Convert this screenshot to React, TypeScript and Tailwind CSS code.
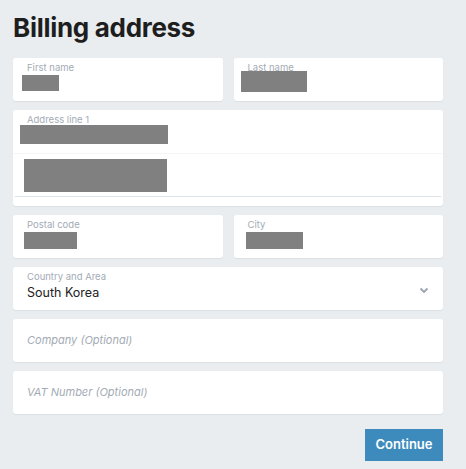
import React from "react";

function Field({ label, children, className = "" }: { label: string; children?: React.ReactNode; className?: string }) {
  return (
    <div className={`h-[43px] bg-white rounded-[3px] shadow-[0_1px_1px_rgba(0,0,0,0.06)] px-[14px] pt-[4px] relative ${className}`}>
      <div className="text-[9.5px] leading-[12px] text-[#a3abb5]">{label}</div>
      {children}
    </div>
  );
}

function Redacted({ className }: { className: string }) {
  return <div className={`bg-[#808080] ${className}`} />;
}

export default function App() {
  return (
    <div className="w-[466px] h-[469px] bg-[#e9edf0] pl-[13px] pr-[23px] pt-[12px] font-['Inter',sans-serif] text-[#222]">
      <h1 className="text-[26px] leading-[32px] font-bold tracking-[-0.3px] text-[#1e1e1e]">Billing address</h1>

      <div className="mt-[14px] flex flex-col gap-[9px]">
        {/* Name row */}
        <div className="grid grid-cols-2 gap-[11px]">
          <Field label="First name">
            <Redacted className="w-[37px] h-[16px] mt-[1px] -ml-[5px]" />
          </Field>
          <Field label="Last name">
            <Redacted className="absolute left-[7px] top-[13px] w-[66px] h-[21px]" />
          </Field>
        </div>

        {/* Address lines */}
        <div className="bg-white rounded-[3px] shadow-[0_1px_1px_rgba(0,0,0,0.06)] h-[96px] flex flex-col">
          <div className="h-[43px] px-[14px] pt-[4px]">
            <div className="text-[9.5px] leading-[12px] text-[#a3abb5]">Address line 1</div>
            <Redacted className="w-[148px] h-[19px] mt-[-1px] -ml-[7px]" />
          </div>
          <div className="h-[1px] bg-[#f4f6f8]" />
          <div className="h-[43px] px-[9px] pt-[5px] border-b border-[#dfe4ea] mx-[2px]">
            <Redacted className="w-[143px] h-[33px]" />
          </div>
        </div>

        {/* Postal / City */}
        <div className="grid grid-cols-2 gap-[11px]">
          <Field label="Postal code">
            <Redacted className="w-[53px] h-[17px] mt-[1px] -ml-[3px]" />
          </Field>
          <Field label="City">
            <Redacted className="w-[57px] h-[17px] mt-[1px] -ml-[2px]" />
          </Field>
        </div>

        {/* Country */}
        <div className="h-[43px] bg-white rounded-[3px] shadow-[0_1px_1px_rgba(0,0,0,0.06)] pl-[14px] pr-[14px] pt-[4px] flex">
          <div className="flex-1">
            <div className="text-[9.5px] leading-[12px] text-[#a3abb5]">Country and Area</div>
            <div className="text-[12.5px] leading-[18px] mt-[1px] text-[#222]">South Korea</div>
          </div>
          <svg width="10" height="7" viewBox="0 0 10 7" className="mt-[16px]">
            <path d="M1.5 1.5 L5 5 L8.5 1.5" fill="none" stroke="#9aa4af" strokeWidth="1.8" />
          </svg>
        </div>

        <div className="h-[43px] bg-white rounded-[3px] shadow-[0_1px_1px_rgba(0,0,0,0.06)] px-[14px] flex items-center">
          <span className="text-[11px] italic text-[#a3abb5]">Company (Optional)</span>
        </div>
        <div className="h-[43px] bg-white rounded-[3px] shadow-[0_1px_1px_rgba(0,0,0,0.06)] px-[14px] flex items-center">
          <span className="text-[11px] italic text-[#a3abb5]">VAT Number (Optional)</span>
        </div>
      </div>

      <div className="flex justify-end mt-[15px]">
        <button className="w-[78px] h-[32px] bg-[#3d8bbd] text-white text-[13px] font-semibold">Continue</button>
      </div>
    </div>
  );
}
